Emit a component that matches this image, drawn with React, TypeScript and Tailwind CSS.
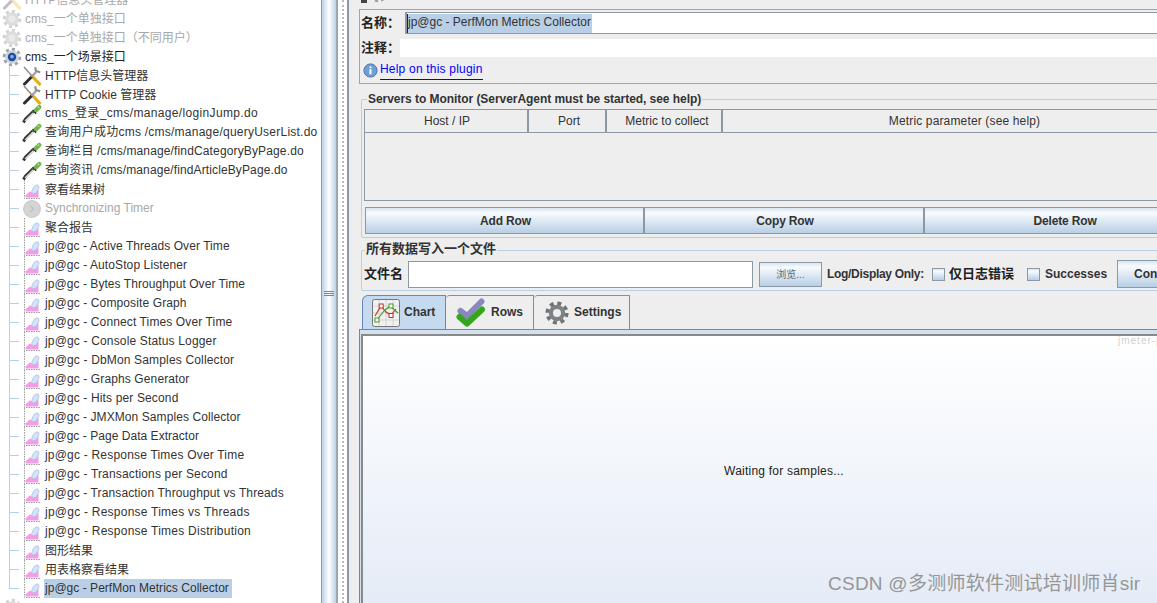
import React from 'react';

const FONT = "font-['Liberation_Sans','Noto_Sans_CJK_SC',sans-serif]";

const GearIcon = ({ kind }: { kind: 'off' | 'on' }) => {
  const body = kind === 'off' ? '#d2d2d2' : '#9aa2ac';
  return (
    <svg width="20" height="20" viewBox="0 0 20 20" className="shrink-0">
      <circle cx="10" cy="10" r="7.6" fill="none" stroke={body} strokeWidth="3.4" strokeDasharray="3 2.9" />
      <circle cx="10" cy="10" r="6.8" fill={kind === 'off' ? '#dcdcdc' : '#ccd2da'} />
      {kind === 'off' ? (
        <circle cx="10" cy="10" r="3.4" fill="#e9e9e9" />
      ) : (
        <>
          <circle cx="10" cy="10" r="4.2" fill="#1d4a98" />
          <circle cx="10" cy="9.6" r="1.9" fill="#86aae0" />
        </>
      )}
    </svg>
  );
};

const ToolsIcon = () => (
  <svg width="20" height="20" viewBox="0 0 20 20" className="shrink-0">
    <path d="M2 1 L10 10" stroke="#8c8c8c" strokeWidth="1.5" />
    <path d="M10 10 L17.5 18" stroke="#e6ae12" strokeWidth="3.2" strokeLinecap="round" />
    <path d="M2.5 18 L9.5 11" stroke="#2e2e2e" strokeWidth="3" strokeLinecap="round" />
    <path d="M9.5 11 L14 6" stroke="#a0a0a0" strokeWidth="2.2" />
    <path d="M13.2 1.2 L14 5 L18.2 6.2" fill="none" stroke="#8f8f8f" strokeWidth="2.2" />
  </svg>
);

const DropperIcon = () => (
  <svg width="20" height="20" viewBox="0 0 20 20" className="shrink-0">
    <path d="M1.5 18.5 L3.4 15.2 L11 7.8" fill="none" stroke="#333" strokeWidth="3" />
    <path d="M3 16.8 L11 8.8" fill="none" stroke="#e2e2e2" strokeWidth="1.2" />
    <path d="M10.6 6 L14.2 9.6" stroke="#1e1e1e" strokeWidth="1.6" />
    <path d="M14 6.2 L17.2 3" stroke="#72b548" strokeWidth="4.4" strokeLinecap="round" />
    <circle cx="16.4" cy="3.2" r="0.9" fill="#b4e094" />
  </svg>
);

const ListenerIcon = () => (
  <svg width="20" height="20" viewBox="0 0 20 20" className="shrink-0">
    <path d="M2.5 0 V18.5 H18" fill="none" stroke="#9c9c9c" strokeWidth="1" strokeDasharray="1.5 1" />
    <path d="M3.5 17.5 V15.5 L8 11.2 L11 13.5 L16.5 10 V17.5 Z" fill="#f49ce6" />
    <ellipse cx="13.4" cy="9.4" rx="2.6" ry="5" transform="rotate(30 13.4 9.4)" fill="#d3e4fa" stroke="#9db8dc" strokeWidth="0.6" />
  </svg>
);

const TimerIcon = () => (
  <svg width="20" height="20" viewBox="0 0 20 20" className="shrink-0">
    <circle cx="10" cy="10" r="8.4" fill="#d4d4d4" stroke="#c6c6c6" />
    <path d="M8.5 7 L11.5 10 L8.5 13" fill="none" stroke="#c0c0c0" strokeWidth="1.2" />
  </svg>
);

const InfoIcon = () => (
  <svg width="15" height="15" viewBox="0 0 15 15" className="shrink-0">
    <circle cx="7.5" cy="7.5" r="6.6" fill="#6f9fd4" stroke="#4a78ae" />
    <circle cx="7.5" cy="4.3" r="1.1" fill="#fff" />
    <rect x="6.5" y="6.2" width="2" height="5" fill="#fff" />
  </svg>
);

const ChartTabIcon = () => (
  <svg width="28" height="28" viewBox="0 0 28 28" className="shrink-0">
    <rect x="0.5" y="0.5" width="27" height="27" rx="2" fill="#f1f1f1" stroke="#777" />
    <path d="M7 1V27M14 1V27M21 1V27M1 7H27M1 14H27M1 21H27" stroke="#d4d4d4" />
    <path d="M3 17 L9 7 L14 13 L19 16 L24 10" fill="none" stroke="#cc2a22" strokeWidth="1.1" />
    <path d="M5 21 L12 12 L18 7 L26 14" fill="none" stroke="#4c9a20" strokeWidth="1.1" />
    <rect x="7.2" y="5" width="4" height="4" fill="#fff" stroke="#cc2a22" />
    <rect x="17" y="14.5" width="4" height="4" fill="#fff" stroke="#cc2a22" />
    <rect x="3" y="19" width="4" height="4" fill="#fff" stroke="#4c9a20" />
    <rect x="17" y="5" width="4" height="4" fill="#fff" stroke="#4c9a20" />
  </svg>
);

const ChecksIcon = () => (
  <svg width="30" height="30" viewBox="0 0 30 30" className="shrink-0">
    <path d="M4.5 13 L11 18 L25.5 3.5" fill="none" stroke="#8a86c0" strokeWidth="6" strokeLinecap="round" strokeLinejoin="round" />
    <path d="M3.5 19 L11 25.5 L26 11.5" fill="none" stroke="#35a51c" strokeWidth="6" strokeLinecap="round" strokeLinejoin="round" />
  </svg>
);

const SettingsIcon = () => (
  <svg width="24" height="24" viewBox="0 0 24 24" className="shrink-0">
    <circle cx="12" cy="12" r="9.6" fill="none" stroke="#6f7476" strokeWidth="4" strokeDasharray="3.9 3.65" />
    <circle cx="12" cy="12" r="8.2" fill="#7d8284" />
    <circle cx="12" cy="12" r="4" fill="#eeeeee" />
  </svg>
);

type Row = { label: string; icon: 'tools' | 'dropper' | 'listener' | 'timer'; muted?: boolean; selected?: boolean; spacing?: string; flat?: boolean };

const children: Row[] = [
  { label: 'HTTP信息头管理器', icon: 'tools', flat: true },
  { label: 'HTTP Cookie 管理器', icon: 'tools', flat: true },
  { label: 'cms_登录_cms/manage/loginJump.do', icon: 'dropper', spacing: 'tracking-[0.34px]' },
  { label: '查询用户成功cms /cms/manage/queryUserList.do', icon: 'dropper', spacing: 'tracking-[0.24px]' },
  { label: '查询栏目 /cms/manage/findCategoryByPage.do', icon: 'dropper', spacing: 'tracking-[0.14px]' },
  { label: '查询资讯 /cms/manage/findArticleByPage.do', icon: 'dropper', spacing: 'tracking-[0.12px]' },
  { label: '察看结果树', icon: 'listener', flat: true },
  { label: 'Synchronizing Timer', icon: 'timer', muted: true },
  { label: '聚合报告', icon: 'listener', flat: true },
  { label: 'jp@gc - Active Threads Over Time', icon: 'listener', spacing: 'tracking-[0.06px]' },
  { label: 'jp@gc - AutoStop Listener', icon: 'listener', spacing: 'tracking-[0.1px]' },
  { label: 'jp@gc - Bytes Throughput Over Time', icon: 'listener', spacing: 'tracking-[0.06px]' },
  { label: 'jp@gc - Composite Graph', icon: 'listener', spacing: 'tracking-[0.12px]' },
  { label: 'jp@gc - Connect Times Over Time', icon: 'listener', spacing: 'tracking-[0.12px]' },
  { label: 'jp@gc - Console Status Logger', icon: 'listener', spacing: 'tracking-[0.16px]' },
  { label: 'jp@gc - DbMon Samples Collector', icon: 'listener', spacing: 'tracking-[0.16px]' },
  { label: 'jp@gc - Graphs Generator', icon: 'listener', spacing: 'tracking-[0.12px]' },
  { label: 'jp@gc - Hits per Second', icon: 'listener', spacing: 'tracking-[0.14px]' },
  { label: 'jp@gc - JMXMon Samples Collector', icon: 'listener', spacing: 'tracking-[0.08px]' },
  { label: 'jp@gc - Page Data Extractor', icon: 'listener', spacing: 'tracking-[0.04px]' },
  { label: 'jp@gc - Response Times Over Time', icon: 'listener', spacing: 'tracking-[0.2px]' },
  { label: 'jp@gc - Transactions per Second', icon: 'listener', spacing: 'tracking-[0.16px]' },
  { label: 'jp@gc - Transaction Throughput vs Threads', icon: 'listener', spacing: 'tracking-[0.12px]' },
  { label: 'jp@gc - Response Times vs Threads', icon: 'listener', spacing: 'tracking-[0.24px]' },
  { label: 'jp@gc - Response Times Distribution', icon: 'listener', spacing: 'tracking-[0.24px]' },
  { label: '图形结果', icon: 'listener', flat: true },
  { label: '用表格察看结果', icon: 'listener', flat: true },
  { label: 'jp@gc - PerfMon Metrics Collector', icon: 'listener', selected: true, spacing: 'tracking-[0.03px]' },
];

const rowIcon = (icon: Row['icon']) => {
  if (icon === 'tools') return <ToolsIcon />;
  if (icon === 'dropper') return <DropperIcon />;
  if (icon === 'timer') return <TimerIcon />;
  return <ListenerIcon />;
};

const TopRow = ({ label, on }: { label: string; on?: boolean }) => (
  <div className="flex h-[19px] items-center pl-[2px]">
    <GearIcon kind={on ? 'on' : 'off'} />
    <span className={`ml-[3px] whitespace-nowrap ${on ? 'text-[#222]' : 'text-[#a8a8a8]'}`}>{label}</span>
  </div>
);

const ChildRow = ({ row, last }: { row: Row; last: boolean }) => (
  <div className="flex h-[19px] items-center pl-[9px]">
    {last ? (
      <div className="h-[10px] w-[10px] self-start border-b border-l border-[#b8cfe5]" />
    ) : (
      <div className="flex h-full w-[10px] items-center border-l border-[#b8cfe5]">
        <div className="h-px w-full bg-[#b8cfe5]" />
      </div>
    )}
    <div className="ml-[3px] flex w-[20px] justify-center">{rowIcon(row.icon)}</div>
    <span
      className={`ml-[2px] flex h-[19px] items-center whitespace-nowrap px-px ${row.flat ? '' : 'pb-[2px]'} ${row.selected ? 'bg-[#b8cfe5] pr-[3px]' : ''} ${row.muted ? 'text-[#a8a8a8]' : 'text-[#333]'} ${row.spacing ?? ''}`}
    >
      {row.label}
    </span>
  </div>
);

const Tree = () => (
  <div className="h-full w-[321px] shrink-0 overflow-hidden bg-white text-[12px]">
    <div className="-mt-[10px]">
      <div className="flex h-[19px] items-center pl-[2px]">
        <div className="opacity-30">
          <ToolsIcon />
        </div>
        <span className="ml-[3px] whitespace-nowrap text-[#a8a8a8]">HTTP信息头管理器</span>
      </div>
      <TopRow label="cms_一个单独接口" />
      <TopRow label="cms_一个单独接口（不同用户）" />
      <TopRow label="cms_一个场景接口" on />
      {children.map((row, i) => (
        <ChildRow key={row.label} row={row} last={i === children.length - 1} />
      ))}
      <TopRow label="" />
    </div>
  </div>
);

const Divider = () => (
  <div className="flex h-full w-[28px] shrink-0 bg-white">
    <div className="flex h-full w-[17px] flex-col items-center justify-center gap-px border-l border-r-2 border-l-[#7f9fcf] border-r-[#9aa6b2] bg-linear-to-r from-[#bcd0e8] via-white to-[#bcd0e8] pb-[17px]">
      <div className="h-px w-[10px] bg-[#6a86c0]" />
      <div className="h-px w-[10px] bg-[#6a86c0]" />
      <div className="h-px w-[10px] bg-[#6a86c0]" />
    </div>
    <div className="ml-[4px] h-full border-l-2 border-dotted border-[#b4bcc4]" />
    <div className="ml-auto h-full w-[2px] bg-[#8b99a6]" />
  </div>
);

const gradientBtn = 'bg-linear-to-b from-[#d9e5f1] via-[#f8fbfe] via-[20%] to-[#b8cfe5]';

const GroupBox = ({ title, className, legendClass, children: content }: { title: string; className: string; legendClass: string; children: React.ReactNode }) => (
  <fieldset className={`ml-[2px] rounded-[2px] border border-[#b8cfe5] pl-[2px] ${className}`}>
    <legend className={`h-[14px] px-[1px] font-bold text-[#333] ${legendClass}`}>{title}</legend>
    {content}
  </fieldset>
);

const HeadCell = ({ w, label, pad }: { w: string; label: string; pad?: string }) => (
  <div className={`flex h-full shrink-0 items-center justify-center border-r-2 border-[#8b99a6] ${w} ${pad ?? ''}`}>{label}</div>
);

const Details = () => (
  <div className="min-w-0 flex-1 overflow-hidden bg-[#eeeeee] text-[12px] text-[#333]">
    <div className="w-[1000px] pl-[10px]">
      <div className="h-[9px]">
        <div className="flex h-[3px] items-end gap-px overflow-hidden pl-[2px]">
          <div className="h-[3px] w-[6px] bg-[#444]" />
          <GearIcon kind="on" />
        </div>
      </div>

      <div className="h-[75px] border border-[#a3a3a3]">
        <div className="flex h-[26px] items-center">
          <span className="w-[45px] shrink-0 whitespace-nowrap pb-px pl-px text-[13px] font-bold text-[#222]">名称：</span>
          <div className="flex h-[22px] flex-1 items-center border-y border-l-2 border-[#8b99a6] bg-white">
            <span className="flex h-[19px] items-center whitespace-nowrap border-l border-[#222] bg-[#b8cfe5] pb-[2px] pr-px">jp@gc - PerfMon Metrics Collector</span>
          </div>
        </div>
        <div className="mt-[3px] flex h-[18px]">
          <span className="w-[40px] shrink-0 whitespace-nowrap pl-px text-[13px] font-bold leading-[18px] text-[#222]">注释：</span>
          <div className="flex-1 bg-white" />
        </div>
        <div className="mt-[5px] flex h-[18px] items-start pl-[3px]">
          <div className="mt-[1px]">
            <InfoIcon />
          </div>
          <a className="ml-[2px] border-b border-[#0000ee] pb-[3px] leading-[14px] tracking-[0.2px] text-[#0000ff]">Help on this plugin</a>
        </div>
      </div>

      <GroupBox title="Servers to Monitor (ServerAgent must be started, see help)" legendClass="ml-[3px] text-[12px] leading-[14px] tracking-[-0.05px]" className="mt-[8px] h-[146px]">
        <div className="mt-[3px] flex h-[24px] border border-[#8b99a6]">
          <HeadCell w="w-[164px]" label="Host / IP" pad="pl-[2px]" />
          <HeadCell w="w-[78px]" label="Port" pad="pl-[4px]" />
          <HeadCell w="w-[116px]" label="Metric to collect" pad="pl-[6px]" />
          <div className="flex w-[483px] shrink-0 items-center justify-center tracking-[0.15px]">Metric parameter (see help)</div>
        </div>
        <div className="h-[68px] border-b border-l border-[#8b99a6]" />
        <div className="mt-[6px] flex h-[27px] pl-px font-bold tracking-[-0.15px]">
          {['Add Row', 'Copy Row', 'Delete Row'].map((label) => (
            <div key={label} className={`flex w-[280px] shrink-0 items-center justify-center border-y border-r-2 border-[#8b99a6] pl-[2px] first:border-l ${gradientBtn}`}>
              {label}
            </div>
          ))}
        </div>
      </GroupBox>

      <GroupBox title="所有数据写入一个文件" legendClass="ml-[1px] text-[13px] leading-[12px]" className="-mb-px mt-[5px] h-[48px]">
        <div className="flex items-center pt-[3px]">
          <span className="w-[44px] shrink-0 text-[13px] font-bold text-[#222]">文件名</span>
          <div className="h-[27px] w-[345px] shrink-0 border border-[#8b99a6] bg-white" />
          <div className={`ml-[6px] flex h-[25px] w-[63px] shrink-0 items-center justify-center border border-[#8b99a6] text-[10px] text-[#666] ${gradientBtn}`}>浏览...</div>
          <span className="ml-[5px] w-[105px] shrink-0 whitespace-nowrap font-bold tracking-[-0.3px]">Log/Display Only:</span>
          <div className={`h-[13px] w-[13px] shrink-0 border border-[#8b99a6] ${gradientBtn}`} />
          <span className="ml-[4px] w-[78px] shrink-0 text-[13px] font-bold text-[#222]">仅日志错误</span>
          <div className={`h-[13px] w-[13px] shrink-0 border border-[#8b99a6] ${gradientBtn}`} />
          <span className="ml-[5px] w-[72px] shrink-0 font-bold">Successes</span>
          <div className={`flex h-[28px] w-[110px] shrink-0 items-center justify-start border border-[#8b99a6] pl-[16px] font-bold ${gradientBtn}`}>Configure</div>
        </div>
      </GroupBox>

      <div className="mt-[5px] flex h-[34px] items-end pl-[3px] font-bold">
        <div className="flex h-[34px] w-[84px] items-center gap-[4px] rounded-tl-[6px] border-x border-t border-[#6a86c0] bg-[#c5d9ef] pl-[9px]">
          <ChartTabIcon />
          <span className="pb-[2px]">Chart</span>
        </div>
        <div className="flex h-[34px] w-[88px] items-center gap-[5px] rounded-tl-[4px] border-r border-t border-[#7f8fa8] pl-[10px]">
          <ChecksIcon />
          <span className="pb-[2px]">Rows</span>
        </div>
        <div className="flex h-[34px] w-[96px] items-center gap-[5px] rounded-tl-[4px] border-r border-t border-[#7f8fa8] pl-[11px]">
          <SettingsIcon />
          <span className="pb-[2px]">Settings</span>
        </div>
      </div>
      <div className="border-l border-t border-[#6a86c0] bg-[#d3e0f0] pl-px pt-[4px]">
        <div className="relative flex h-[280px] items-center justify-center border-l-2 border-t-2 border-[#8a8a8a] bg-linear-to-b from-white via-[#f8fafd] via-[25%] to-[#e4ebf6] pb-[9px] pr-[144px]">
          <span className="tracking-[0.22px] text-[#222]">Waiting for samples...</span>
          <span className="absolute left-[755px] top-0 text-[10px] leading-[10px] tracking-[1px] text-[#cfcfcf]">jmeter-plugins.org</span>
        </div>
      </div>
    </div>
  </div>
);

export default function App() {
  return (
    <div className={`relative flex h-[603px] w-[1157px] overflow-hidden ${FONT}`}>
      <Tree />
      <Divider />
      <Details />
      <span className="absolute left-[828px] top-[573px] whitespace-nowrap text-[19px] leading-[22px] tracking-[0.25px] text-[#969696]">CSDN @多测师软件测试培训师肖sir</span>
    </div>
  );
}
